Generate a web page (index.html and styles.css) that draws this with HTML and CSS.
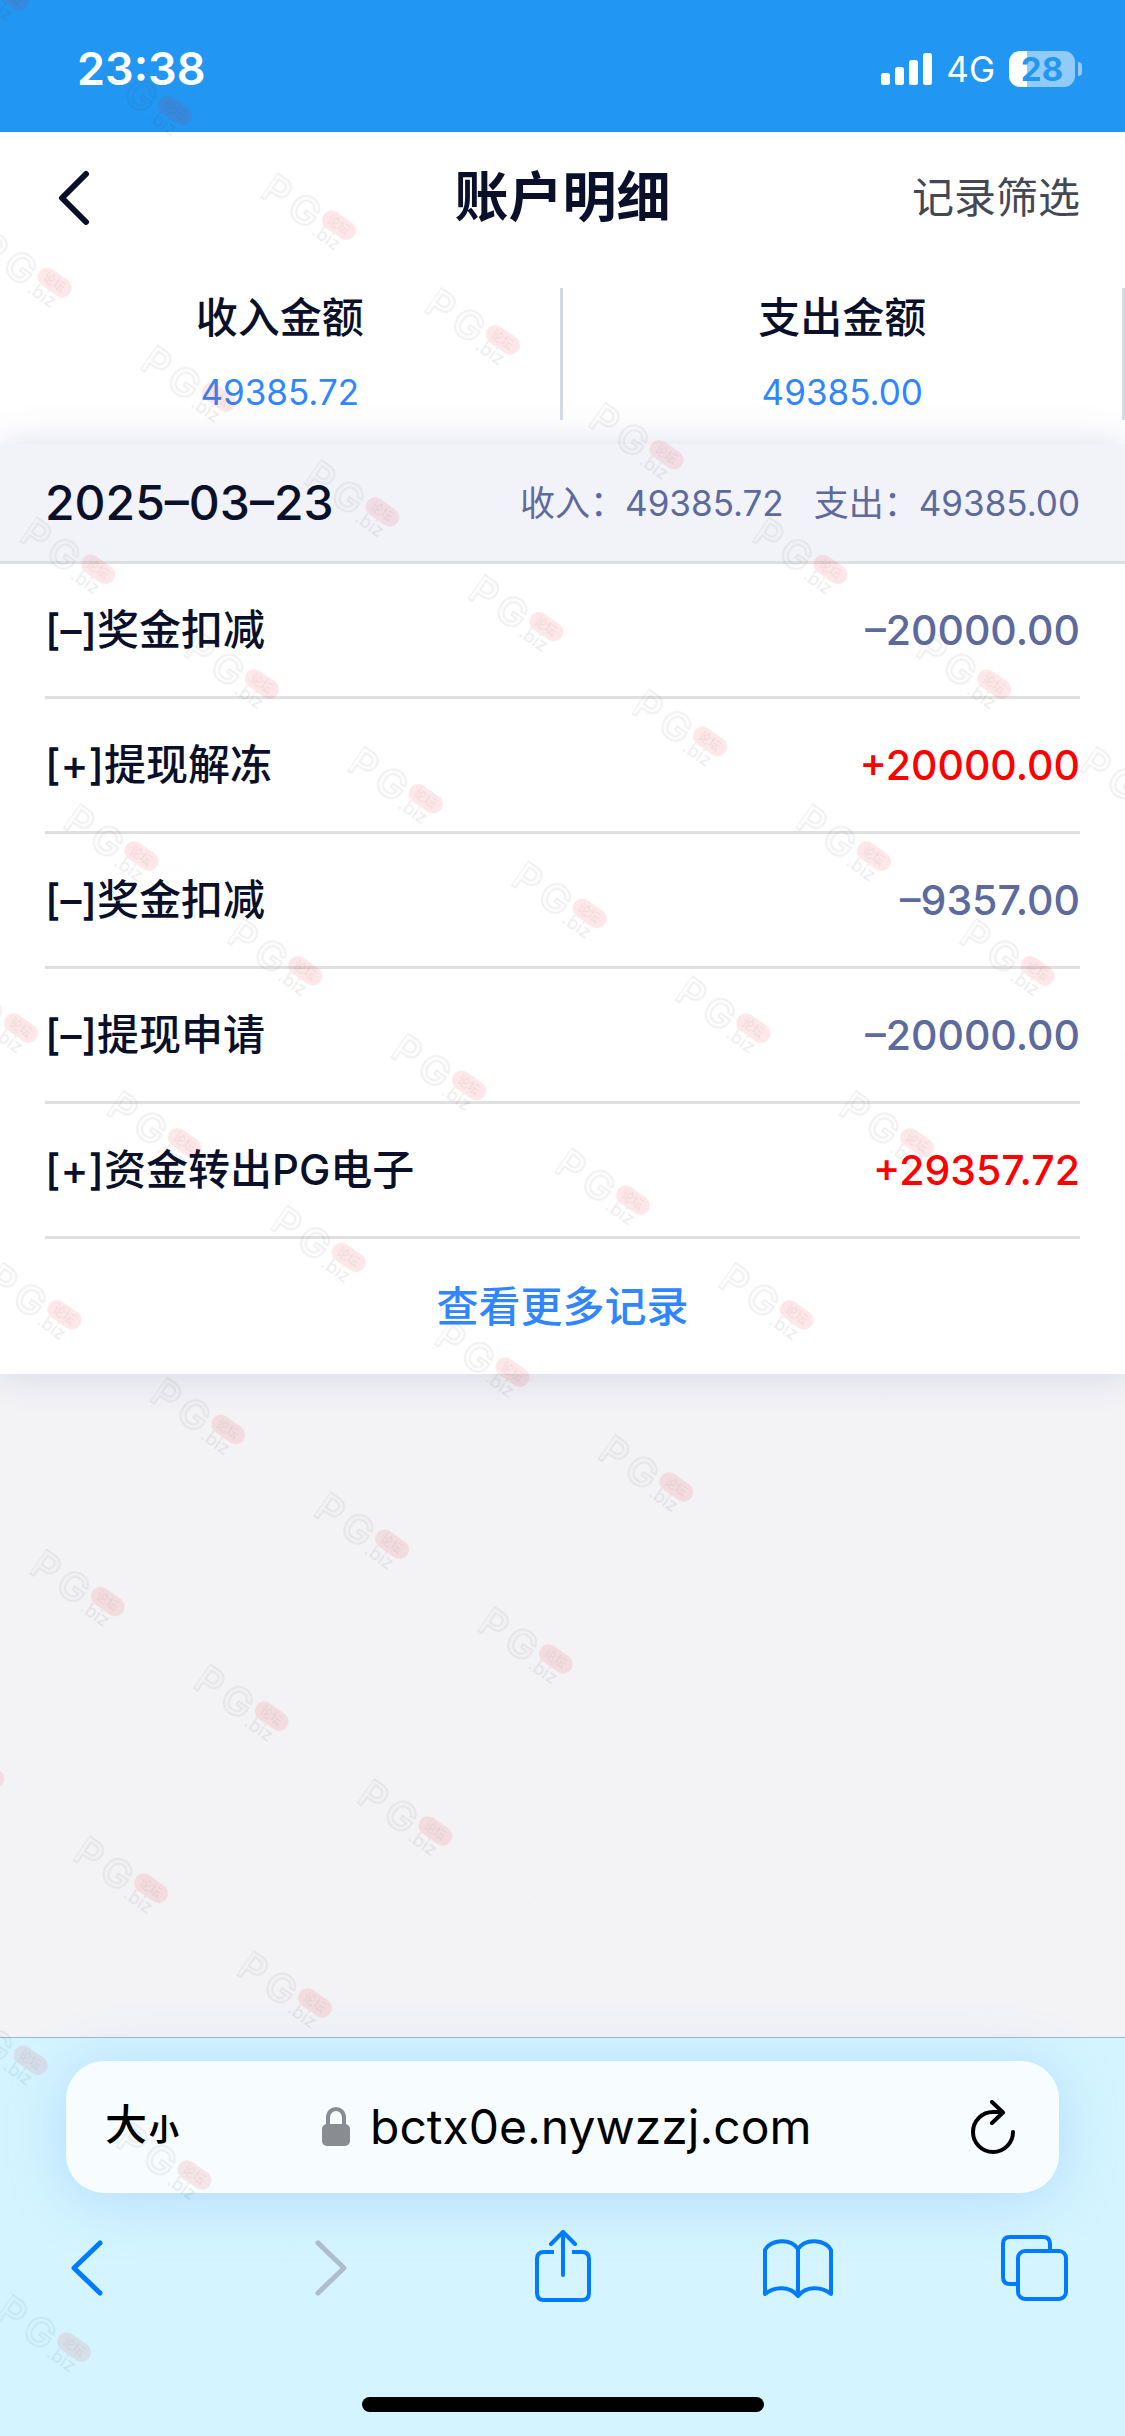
FILE: index.html
```html
<!DOCTYPE html>
<html lang="zh-CN">
<head>
    <meta charset="UTF-8" />
    <meta name="viewport" content="width=device-width, initial-scale=1.0" />
    <title>账户明细</title>
    <link rel="stylesheet" href="styles.css">
</head>
<body>
<div class="status-bar">
    <time class="clock">23:38</time>
    <div class="status-icons">
        <svg class="signal" viewBox="0 0 51 32" aria-hidden="true">
            <rect x="0" y="20" width="9" height="12" rx="2.5" />
            <rect x="14" y="14" width="9" height="18" rx="2.5" />
            <rect x="28" y="7" width="9" height="25" rx="2.5" />
            <rect x="42" y="0" width="9" height="32" rx="2.5" />
        </svg>
        <span class="network">4G</span>
        <div class="battery">
            <span class="battery-body">28</span>
            <span class="battery-tip"></span>
        </div>
    </div>
</div>

<header class="nav">
    <button type="button" class="nav-back" aria-label="返回">
        <svg viewBox="0 0 32 56" aria-hidden="true"><path d="M28 4 L4 28 L28 52" /></svg>
    </button>
    <h1>账户明细</h1>
    <button type="button" class="nav-filter">记录筛选</button>
</header>

<main>
    <section class="summary">
        <div class="summary-item">
            <h2>收入金额</h2>
            <p>49385.72</p>
        </div>
        <div class="summary-item">
            <h2>支出金额</h2>
            <p>49385.00</p>
        </div>
    </section>

    <section class="card">
        <div class="day">
            <h2>2025–03–23</h2>
            <p><span>收入：49385.72</span><span>支出：49385.00</span></p>
        </div>
        <ul class="records">
            <li><span>[–]奖金扣减</span><span class="amount">–20000.00</span></li>
            <li><span>[+]提现解冻</span><span class="amount plus">+20000.00</span></li>
            <li><span>[–]奖金扣减</span><span class="amount">–9357.00</span></li>
            <li><span>[–]提现申请</span><span class="amount">–20000.00</span></li>
            <li><span>[+]资金转出PG电子</span><span class="amount plus">+29357.72</span></li>
        </ul>
        <a class="more" href="#">查看更多记录</a>
    </section>
</main>

<footer class="browser">
    <div class="address-bar">
        <button type="button" class="text-size" aria-label="大小">大<small>小</small></button>
        <div class="address">
            <label for="url" aria-label="网址">
                <svg class="lock" viewBox="0 0 28 40" aria-hidden="true">
                    <path d="M6 19 V11 C6 -1 22 -1 22 11 V19" />
                    <rect x="0" y="17" width="28" height="22" rx="5" />
                </svg>
            </label>
            <input type="text" id="url" value="bctx0e.nywzzj.com" />
        </div>
        <button type="button" class="reload" aria-label="重新载入">
            <svg viewBox="0 0 44 54" aria-hidden="true">
                <path d="M42 32 A20 20 0 1 1 22 12 H31" />
                <path d="M21 2 L32 12.500 L21 23" />
            </svg>
        </button>
    </div>
    <nav class="tools">
        <button type="button" aria-label="后退">
            <svg viewBox="0 0 72 72" aria-hidden="true"><path class="chevron" d="M49 13 L23 38 L49 63" /></svg>
        </button>
        <button type="button" aria-label="前进" disabled>
            <svg viewBox="0 0 72 72" aria-hidden="true"><path class="chevron" d="M30 13 L56 38 L30 63" /></svg>
        </button>
        <button type="button" aria-label="分享">
            <svg viewBox="0 0 72 72" aria-hidden="true">
                <path stroke-linecap="butt" d="M29 22 H19 Q12 22 12 29 V63 Q12 70 19 70 H57 Q64 70 64 63 V29 Q64 22 57 22 H47" />
                <path d="M38 45 V2 M26 14 L38 2 L50 14" />
            </svg>
        </button>
        <button type="button" aria-label="书签">
            <svg viewBox="0 0 72 72" aria-hidden="true">
                <path d="M37 66 C29 56 14 56 4 64 V20 C10 9 30 8 37 19 C44 8 64 9 70 20 V64 C60 56 45 56 37 66 Z M37 19 V66" />
            </svg>
        </button>
        <button type="button" aria-label="标签页">
            <svg viewBox="0 0 72 72" aria-hidden="true">
                <path d="M20 54 H12 Q5 54 5 47 V14 Q5 7 12 7 H45 Q52 7 52 14 V21" />
                <rect x="20" y="21" width="48" height="48" rx="7" />
            </svg>
        </button>
    </nav>
    <div class="home-indicator"></div>
</footer>

<svg class="watermark" aria-hidden="true">
    <defs>
        <pattern id="mark" x="0" y="-10" width="200" height="210" patternUnits="userSpaceOnUse">
            <g transform="translate(0 10)">
                <text class="mark-name" x="-3" y="28">P</text>
                <text class="mark-name" x="29" y="28">G</text>
                <rect class="mark-pill" x="62" y="-3" width="37" height="19" rx="9" />
                <text class="mark-label" x="68" y="11">论坛</text>
                <text class="mark-domain" x="62" y="30">.biz</text>
            </g>
        </pattern>
    </defs>
    <rect x="-1400" y="-1060" width="2000" height="2310" transform="translate(166 1378) rotate(35)" fill="url(#mark)" />
</svg>
</body>
</html>
```
FILE: styles.css
```css
* {
    box-sizing: border-box;
}
body {
    position: relative;
    display: flex;
    flex-direction: column;
    min-height: 100vh;
    margin: 0;
    background-color: #f3f3f5;
    color: #0a1029;
    font-family: Inter, "Noto Sans CJK SC", sans-serif;
    font-size: 42px;
    line-height: 60px;
    overflow-x: hidden;
}
h1, h2, p, ul {
    margin: 0;
    padding: 0;
}
button {
    padding: 0;
    border: none;
    background: none;
    color: inherit;
    font: inherit;
    white-space: nowrap;
    cursor: pointer;
}
svg {
    display: block;
    fill: none;
    stroke-linecap: round;
    stroke-linejoin: round;
}

/* status bar */
.status-bar {
    display: flex;
    justify-content: space-between;
    align-items: center;
    height: 132px;
    padding: 6px 43px 0 77px;
    background-color: #2196f3;
    color: white;
}
.clock {
    font-size: 45px;
    font-weight: 600;
}
.status-icons {
    display: flex;
    align-items: center;
}
.signal {
    width: 51px;
    height: 32px;
    fill: white;
}
.network {
    margin: 0 14px;
    font-size: 35px;
}
.battery {
    display: flex;
    align-items: center;
    gap: 3px;
}
.battery-body {
    width: 66px;
    border-radius: 11px;
    background: linear-gradient(to right, white 28%, rgba(255, 255, 255, 0.5) 28%);
    color: #2196f3;
    font-size: 33px;
    font-weight: 700;
    line-height: 36px;
    text-align: center;
}
.battery-tip {
    width: 4px;
    height: 14px;
    border-radius: 0 4px 4px 0;
    background-color: rgba(255, 255, 255, 0.5);
}

/* page header */
.nav {
    display: grid;
    grid-template-columns: 1fr auto 1fr;
    align-items: center;
    height: 132px;
    padding: 0 45px 0 58px;
    background-color: white;
}
.nav-back {
    justify-self: start;
}
.nav-back svg {
    width: 32px;
    height: 56px;
    stroke: #0a1029;
    stroke-width: 6px;
}
.nav h1 {
    margin-right: 13px;
    font-size: 54px;
    font-weight: 700;
    line-height: 72px;
}
.nav-filter {
    justify-self: end;
    color: #444854;
}

/* totals */
.summary {
    display: flex;
    padding: 24px 0;
    background-color: white;
}
.summary-item {
    flex: 1;
    border-right: 3px solid #d6d9e6;
    text-align: center;
}
.summary-item h2 {
    font-size: 42px;
    font-weight: 500;
}
.summary-item p {
    padding: 20px 0 4px;
    color: #2f86ff;
    font-size: 35px;
    line-height: 48px;
}

/* records */
.card {
    background-color: white;
    box-shadow: 0 0 36px rgba(80, 90, 150, 0.2);
}
.day {
    display: flex;
    justify-content: space-between;
    align-items: center;
    height: 120px;
    padding: 0 45px;
    border-bottom: 3px solid #dedfe1;
    background-color: #f2f3f9;
}
.day h2 {
    font-size: 48px;
    font-weight: 500;
}
.day p {
    display: flex;
    gap: 30px;
    color: #5c6a9e;
    font-size: 35px;
}
.records {
    margin: 0 45px;
    list-style: none;
}
.records li {
    display: flex;
    justify-content: space-between;
    align-items: center;
    height: 135px;
    border-bottom: 3px solid #e0e0e0;
    font-weight: 500;
}
.amount {
    color: #5c6a9e;
    font-size: 41px;
}
.amount.plus {
    color: #ff0000;
}
.more {
    display: block;
    color: #2f86ff;
    font-weight: 500;
    line-height: 135px;
    text-align: center;
    text-decoration: none;
}

/* browser bar */
.browser {
    margin-top: auto;
    padding: 23px 51px 24px;
    border-top: 1px solid #9bb8d3;
    background-color: #d4f5ff;
}
.address-bar {
    display: flex;
    align-items: center;
    height: 132px;
    margin: 0 15px;
    padding: 0 44px 0 39px;
    border-radius: 38px;
    background-color: #f7fdff;
    box-shadow: 0 6px 60px rgba(100, 160, 255, 0.3);
    color: black;
}
.text-size {
    font-weight: 500;
}
.text-size small {
    margin-left: 2px;
    font-size: 30px;
    font-weight: 700;
}
.address {
    display: flex;
    flex: 1;
    align-items: center;
    gap: 20px;
    min-width: 0;
    padding-left: 143px;
}
.address input {
    flex: 1;
    min-width: 0;
    padding: 0;
    border: none;
    background: none;
    color: black;
    font: inherit;
    font-size: 48px;
}
.lock {
    width: 28px;
    height: 40px;
    fill: #8a8c94;
}
.lock path {
    fill: none;
    stroke: #8a8c94;
    stroke-width: 4px;
}
.reload svg {
    width: 44px;
    height: 54px;
    stroke: black;
    stroke-width: 4px;
}
.tools {
    display: flex;
    justify-content: space-between;
    margin-top: 37px;
    padding-right: 4px;
}
.tools svg {
    width: 72px;
    height: 72px;
    stroke: #007aff;
    stroke-width: 4px;
}
.tools .chevron {
    stroke-width: 5px;
}
.tools button:disabled svg {
    stroke: #aebccb;
}
.home-indicator {
    width: 402px;
    height: 15px;
    margin: 95px auto 0;
    border-radius: 8px;
    background-color: black;
}

/* watermark over the whole page */
.watermark {
    position: absolute;
    inset: 0;
    width: 100%;
    height: 100%;
    pointer-events: none;
}
.mark-name {
    fill: rgba(60, 60, 60, 0.01);
    stroke: rgba(60, 60, 60, 0.07);
    stroke-width: 2px;
    stroke-dasharray: 2 1;
    font-size: 40px;
    font-weight: 600;
}
.mark-pill {
    fill: rgba(240, 20, 30, 0.1);
}
.mark-label {
    fill: rgba(60, 60, 60, 0.07);
    font-size: 12px;
    font-weight: 500;
}
.mark-domain {
    fill: rgba(60, 60, 60, 0.1);
    font-size: 18px;
}
```
